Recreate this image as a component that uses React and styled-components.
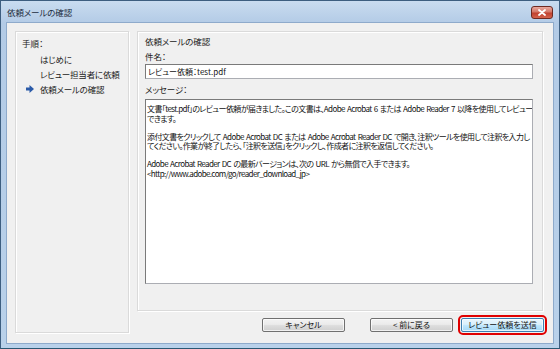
import styled, { createGlobalStyle } from 'styled-components';

const GlobalStyle = createGlobalStyle`
  html, body {
    margin: 0;
    padding: 0;
    background: #ffffff;
  }
  body {
    font-family: "Noto Sans CJK JP", "Liberation Sans", sans-serif;
    font-feature-settings: "palt" 1;
  }
`;

const Window = styled.div`
  width: 560px;
  height: 349px;
  box-sizing: border-box;
  display: flex;
  flex-direction: column;
  background: linear-gradient(to bottom, #c9dcf0 0px, #b3cbe6 22px, #b9d1ea 100%);
  border: 1px solid #3d5e80;
  border-bottom-color: #2a5873;
  padding: 0 5px 4px 5px;
`;

const TitleBar = styled.div`
  height: 21px;
  display: flex;
  align-items: center;
  justify-content: space-between;
  padding: 0 1px 0 1px;
`;

const Title = styled.span`
  font-size: 8.5px;
  color: #1c2d40;
  letter-spacing: -0.1px;
`;

const CloseButton = styled.div`
  width: 20px;
  height: 11px;
  margin-top: 1px;
  border: 1px solid #6e2a22;
  border-radius: 3px;
  background: linear-gradient(to bottom, #e9a99f 0%, #d47767 45%, #c0412f 55%, #d4624c 100%);
  display: flex;
  align-items: center;
  justify-content: center;
  svg {
    display: block;
  }
`;

const Client = styled.div`
  flex: 1;
  min-height: 0;
  background: #f0f0f0;
  border: 1px solid #8eaacb;
  display: grid;
  grid-template-columns: 114px minmax(0, 1fr);
  gap: 8px;
  padding: 8px 10px 10px 8px;
  box-sizing: border-box;
`;

const Panel = styled.div`
  border: 1px solid #dadada;
  box-shadow: inset 1px 1px 0 #ffffff, 1px 1px 0 #ffffff;
  box-sizing: border-box;
  min-width: 0;
`;

const StepsPanel = styled(Panel)`
  padding: 3px 0 0 6px;
`;

const StepsHeading = styled.div`
  font-size: 8.5px;
  color: #222;
  height: 16px;
  line-height: 16px;
`;

const Step = styled.div`
  display: flex;
  align-items: center;
  height: 15px;
  font-size: 8.5px;
  color: #222;
  letter-spacing: -0.2px;
  white-space: nowrap;
  padding-left: ${(p) => (p.current ? '4px' : '18px')};
  gap: 6px;
`;

const RightColumn = styled.div`
  display: flex;
  flex-direction: column;
  min-width: 0;
`;

const ContentPanel = styled(Panel)`
  flex: 1;
  padding: 2px 9px 26px 7px;
  display: flex;
  flex-direction: column;
`;

const Label = styled.div`
  font-size: 8.5px;
  color: #222;
  height: 15px;
  line-height: 15px;
  letter-spacing: -0.1px;
`;

const Input = styled.div`
  height: 15px;
  box-sizing: border-box;
  background: #fff;
  border: 1px solid #abadb3;
  border-top-color: #7a7a7a;
  border-left-color: #7a7a7a;
  font-size: 8px;
  line-height: 13px;
  padding: 0 2px;
  color: #111;
  margin-bottom: 3px;
`;

const TextArea = styled.div`
  flex: 1;
  box-sizing: border-box;
  background: #fff;
  border: 1px solid #abadb3;
  border-top-color: #7a7a7a;
  border-left-color: #7a7a7a;
  padding: 4px 1px;
  margin-top: 2px;
  font-size: 8px;
  color: #111;
  letter-spacing: -0.62px;
  word-spacing: 1px;
  overflow: hidden;
`;

const Line = styled.div`
  height: ${(p) => (p.blank ? '8.5px' : '9.5px')};
  line-height: 9.5px;
  white-space: nowrap;
`;

const Footer = styled.div`
  height: 22px;
  display: flex;
  align-items: flex-end;
  justify-content: flex-end;
  margin-right: -1px;
`;

const Button = styled.div`
  width: 83px;
  height: 14px;
  box-sizing: border-box;
  border: 1px solid ${(p) => (p.primary ? '#3c7fb1' : '#707070')};
  border-radius: 2px;
  background: ${(p) =>
    p.primary
      ? 'linear-gradient(to bottom, #eaf6fd 0%, #d9f0fc 45%, #bee6fd 55%, #a7d9f5 100%)'
      : 'linear-gradient(to bottom, #f2f2f2 0%, #ebebeb 45%, #dddddd 55%, #cfcfcf 100%)'};
  box-shadow: inset 0 0 0 1px rgba(255, 255, 255, 0.7);
  font-size: 8px;
  line-height: 12px;
  text-align: center;
  white-space: nowrap;
  color: #111;
  margin-left: ${(p) => p.gap || 0}px;
  margin-bottom: 1px;
  outline: ${(p) => (p.highlight ? '2px solid #e00000' : 'none')};
  outline-offset: 1px;
`;

const Arrow = () => (
  <svg width="8" height="8" viewBox="0 0 8 8">
    <path d="M0 2.5 H3.5 V0 L8 4 L3.5 8 V5.5 H0 Z" fill="#2a5aa8" />
  </svg>
);

const CloseX = () => (
  <svg width="8" height="7" viewBox="0 0 8 7">
    <path d="M1 1 L7 6 M7 1 L1 6" stroke="#ffffff" strokeWidth="1.8" strokeLinecap="round" />
  </svg>
);

export default function App() {
  return (
    <>
      <GlobalStyle />
      <Window>
        <TitleBar>
          <Title>依頼メールの確認</Title>
          <CloseButton>
            <CloseX />
          </CloseButton>
        </TitleBar>
        <Client>
          <StepsPanel>
            <StepsHeading>手順：</StepsHeading>
            <Step>はじめに</Step>
            <Step>レビュー担当者に依頼</Step>
            <Step current>
              <Arrow />
              依頼メールの確認
            </Step>
          </StepsPanel>
          <RightColumn>
            <ContentPanel>
              <Label>依頼メールの確認</Label>
              <Label>件名：</Label>
              <Input>レビュー依頼：test.pdf</Input>
              <Label>メッセージ：</Label>
              <TextArea>
                <Line>文書「test.pdf」のレビュー依頼が届きました。この文書は、Adobe Acrobat 6 または Adobe Reader 7 以降を使用してレビュー</Line>
                <Line>できます。</Line>
                <Line blank />
                <Line>添付文書をクリックして Adobe Acrobat DC または Adobe Acrobat Reader DC で開き、注釈ツールを使用して注釈を入力し</Line>
                <Line>てください。作業が終了したら、「注釈を送信」をクリックし、作成者に注釈を返信してください。</Line>
                <Line blank />
                <Line>Adobe Acrobat Reader DC の最新バージョンは、次の URL から無償で入手できます。</Line>
                <Line>&lt;http://www.adobe.com/go/reader_download_jp&gt;</Line>
              </TextArea>
            </ContentPanel>
            <Footer>
              <Button>キャンセル</Button>
              <Button gap={25}>&lt; 前に戻る</Button>
              <Button gap={8} primary highlight>
                レビュー依頼を送信
              </Button>
            </Footer>
          </RightColumn>
        </Client>
      </Window>
    </>
  );
}
